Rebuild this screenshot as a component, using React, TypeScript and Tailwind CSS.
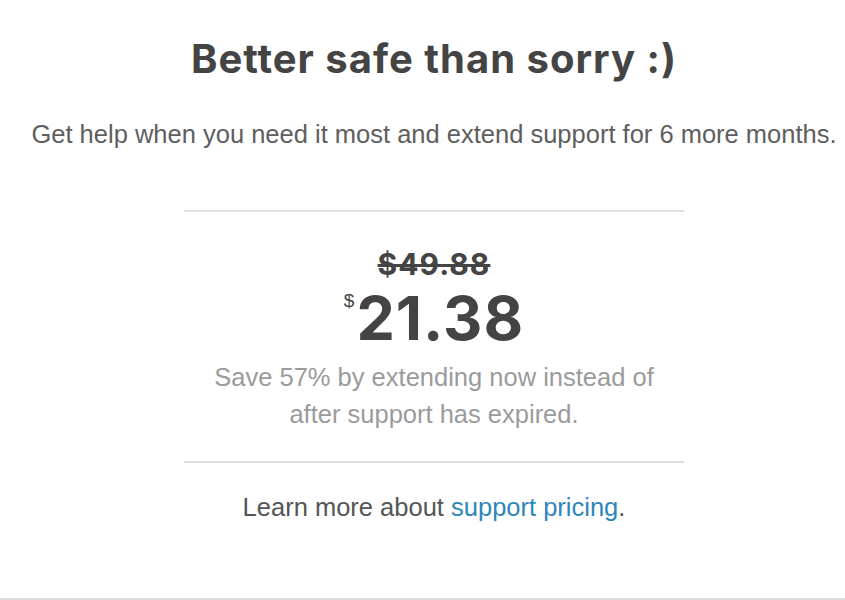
import React from "react";

export default function App() {
  return (
    <div className="w-[845px] h-[600px] bg-white border-b-2 border-[#dddddd] box-border overflow-hidden font-['Liberation_Sans',Arial,sans-serif]">
      <div className="flex flex-col items-center pl-[23px] pt-[35px]">
        <h1 className="font-['Inter','Liberation_Sans',Arial,sans-serif] text-[40px] leading-[48px] font-bold text-[#444444] tracking-[1px]">
          Better safe than sorry :)
        </h1>
        <p className="mt-[36px] text-[25.5px] leading-[30px] text-[#5e5e5e]">
          Get help when you need it most and extend support for 6 more months.
        </p>
        <div className="mt-[61px] w-[500px] h-[2px] bg-[#e0e0e0]" />
        <div className="mt-[35px] font-['Inter','Liberation_Sans',Arial,sans-serif] text-[30px] leading-[34px] font-bold tracking-[1px] text-[#444444] line-through">
          $49.88
        </div>
        <div className="mt-[5px] flex items-start text-[#444444]">
          <span className="text-[19px] leading-[19px] mt-[5px] mr-[2px]">$</span>
          <span className="font-['Inter','Liberation_Sans',Arial,sans-serif] text-[61px] leading-[64px] font-bold tracking-[1px]">
            21.38
          </span>
        </div>
        <p className="mt-[9px] w-[460px] text-center text-[25.5px] leading-[37px] text-[#9b9b9b]">
          Save 57% by extending now instead of after support has expired.
        </p>
        <div className="mt-[28px] w-[500px] h-[2px] bg-[#e0e0e0]" />
        <p className="mt-[29px] text-[25.5px] leading-[30px] text-[#555555]">
          Learn more about{" "}
          <a href="#" className="text-[#2e86b9]">
            support pricing
          </a>
          .
        </p>
      </div>
    </div>
  );
}
